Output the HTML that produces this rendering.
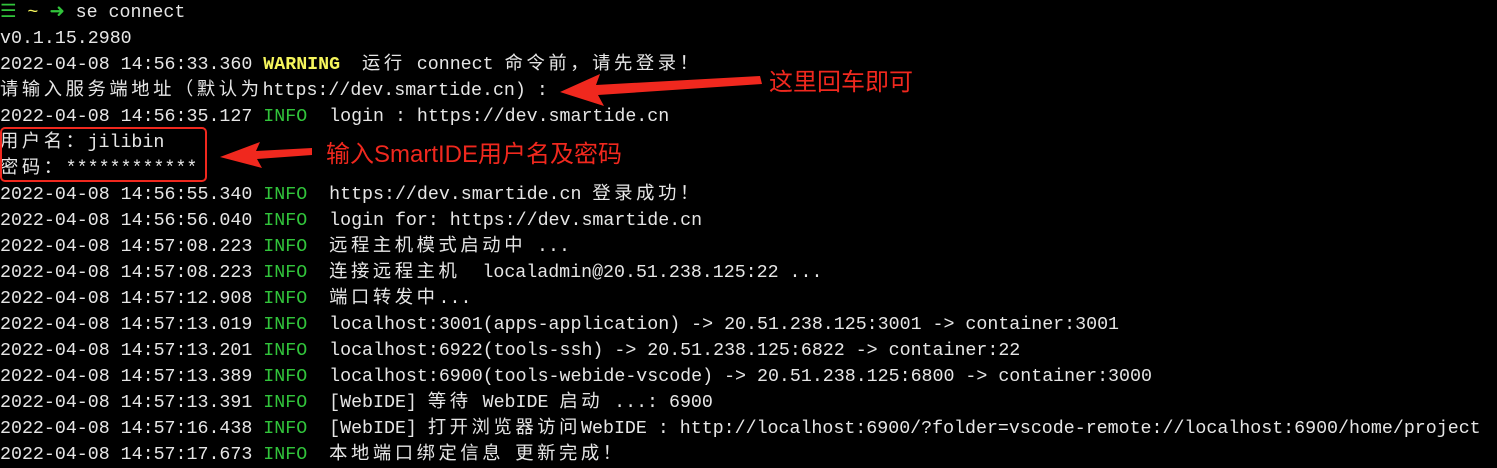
<!DOCTYPE html>
<html><head><meta charset="utf-8"><style>
body{margin:0;width:1497px;height:465px;background:#000;overflow:hidden;position:relative;font-family:"Liberation Mono","Noto Sans CJK SC",monospace;font-size:18.3px;color:#e6e6e6}
.l{position:absolute;left:0;white-space:pre;height:26px;line-height:26px}
.c{letter-spacing:3.6px}
.g{color:#31c43b}.y{color:#f5f55c;font-weight:bold}.yy{color:#f5f55c}
.red{position:absolute;color:#f0281e;font-family:"Liberation Sans","Noto Sans CJK SC",sans-serif;font-size:24px;white-space:pre}
</style></head><body>
<div class="l" style="top:0px"><span class="g">☰</span> <span class="yy">~</span> <span class="g">➜</span> se connect</div>
<div class="l" style="top:26px">v0.1.15.2980</div>
<div class="l" style="top:52px">2022-04-08 14:56:33.360 <span class="y">WARNING</span>  <span class="c">运行</span> connect <span class="c">命令前，请先登录！</span></div>
<div class="l" style="top:78px"><span class="c">请输入服务端地址（默认为</span>https://dev.smartide.cn) :</div>
<div class="l" style="top:104px">2022-04-08 14:56:35.127 <span class="g">INFO</span>  login : https://dev.smartide.cn</div>
<div class="l" style="top:130px"><span class="c">用户名：</span>jilibin</div>
<div class="l" style="top:156px"><span class="c">密码：</span>************</div>
<div class="l" style="top:182px">2022-04-08 14:56:55.340 <span class="g">INFO</span>  https://dev.smartide.cn <span class="c">登录成功！</span></div>
<div class="l" style="top:208px">2022-04-08 14:56:56.040 <span class="g">INFO</span>  login for: https://dev.smartide.cn</div>
<div class="l" style="top:234px">2022-04-08 14:57:08.223 <span class="g">INFO</span>  <span class="c">远程主机模式启动中</span> ...</div>
<div class="l" style="top:260px">2022-04-08 14:57:08.223 <span class="g">INFO</span>  <span class="c">连接远程主机</span>  localadmin@20.51.238.125:22 ...</div>
<div class="l" style="top:286px">2022-04-08 14:57:12.908 <span class="g">INFO</span>  <span class="c">端口转发中</span>...</div>
<div class="l" style="top:312px">2022-04-08 14:57:13.019 <span class="g">INFO</span>  localhost:3001(apps-application) -> 20.51.238.125:3001 -> container:3001</div>
<div class="l" style="top:338px">2022-04-08 14:57:13.201 <span class="g">INFO</span>  localhost:6922(tools-ssh) -> 20.51.238.125:6822 -> container:22</div>
<div class="l" style="top:364px">2022-04-08 14:57:13.389 <span class="g">INFO</span>  localhost:6900(tools-webide-vscode) -> 20.51.238.125:6800 -> container:3000</div>
<div class="l" style="top:390px">2022-04-08 14:57:13.391 <span class="g">INFO</span>  [WebIDE] <span class="c">等待</span> WebIDE <span class="c">启动</span> ...: 6900</div>
<div class="l" style="top:416px">2022-04-08 14:57:16.438 <span class="g">INFO</span>  [WebIDE] <span class="c">打开浏览器访问</span>WebIDE : http://localhost:6900/?folder=vscode-remote://localhost:6900/home/project</div>
<div class="l" style="top:442px">2022-04-08 14:57:17.673 <span class="g">INFO</span>  <span class="c">本地端口绑定信息</span> <span class="c">更新完成！</span></div>
<div style="position:absolute;left:0;top:127px;width:203px;height:51px;border:2px solid #f0281e;border-radius:5px"></div>
<svg style="position:absolute;left:0;top:0" width="1497" height="465">
<path d="M760 76 L596 85 L600 74 L560 92 L604 106 L598 95 L762 84 Z" fill="#f0281e"/>
<path d="M312 148 L256 151 L260 142 L220 157 L262 168 L257 159 L312 155 Z" fill="#f0281e"/>
</svg>
<div class="red" style="left:769px;top:62px">这里回车即可</div>
<div class="red" style="left:326px;top:134px">输入SmartIDE用户名及密码</div>
</body></html>
